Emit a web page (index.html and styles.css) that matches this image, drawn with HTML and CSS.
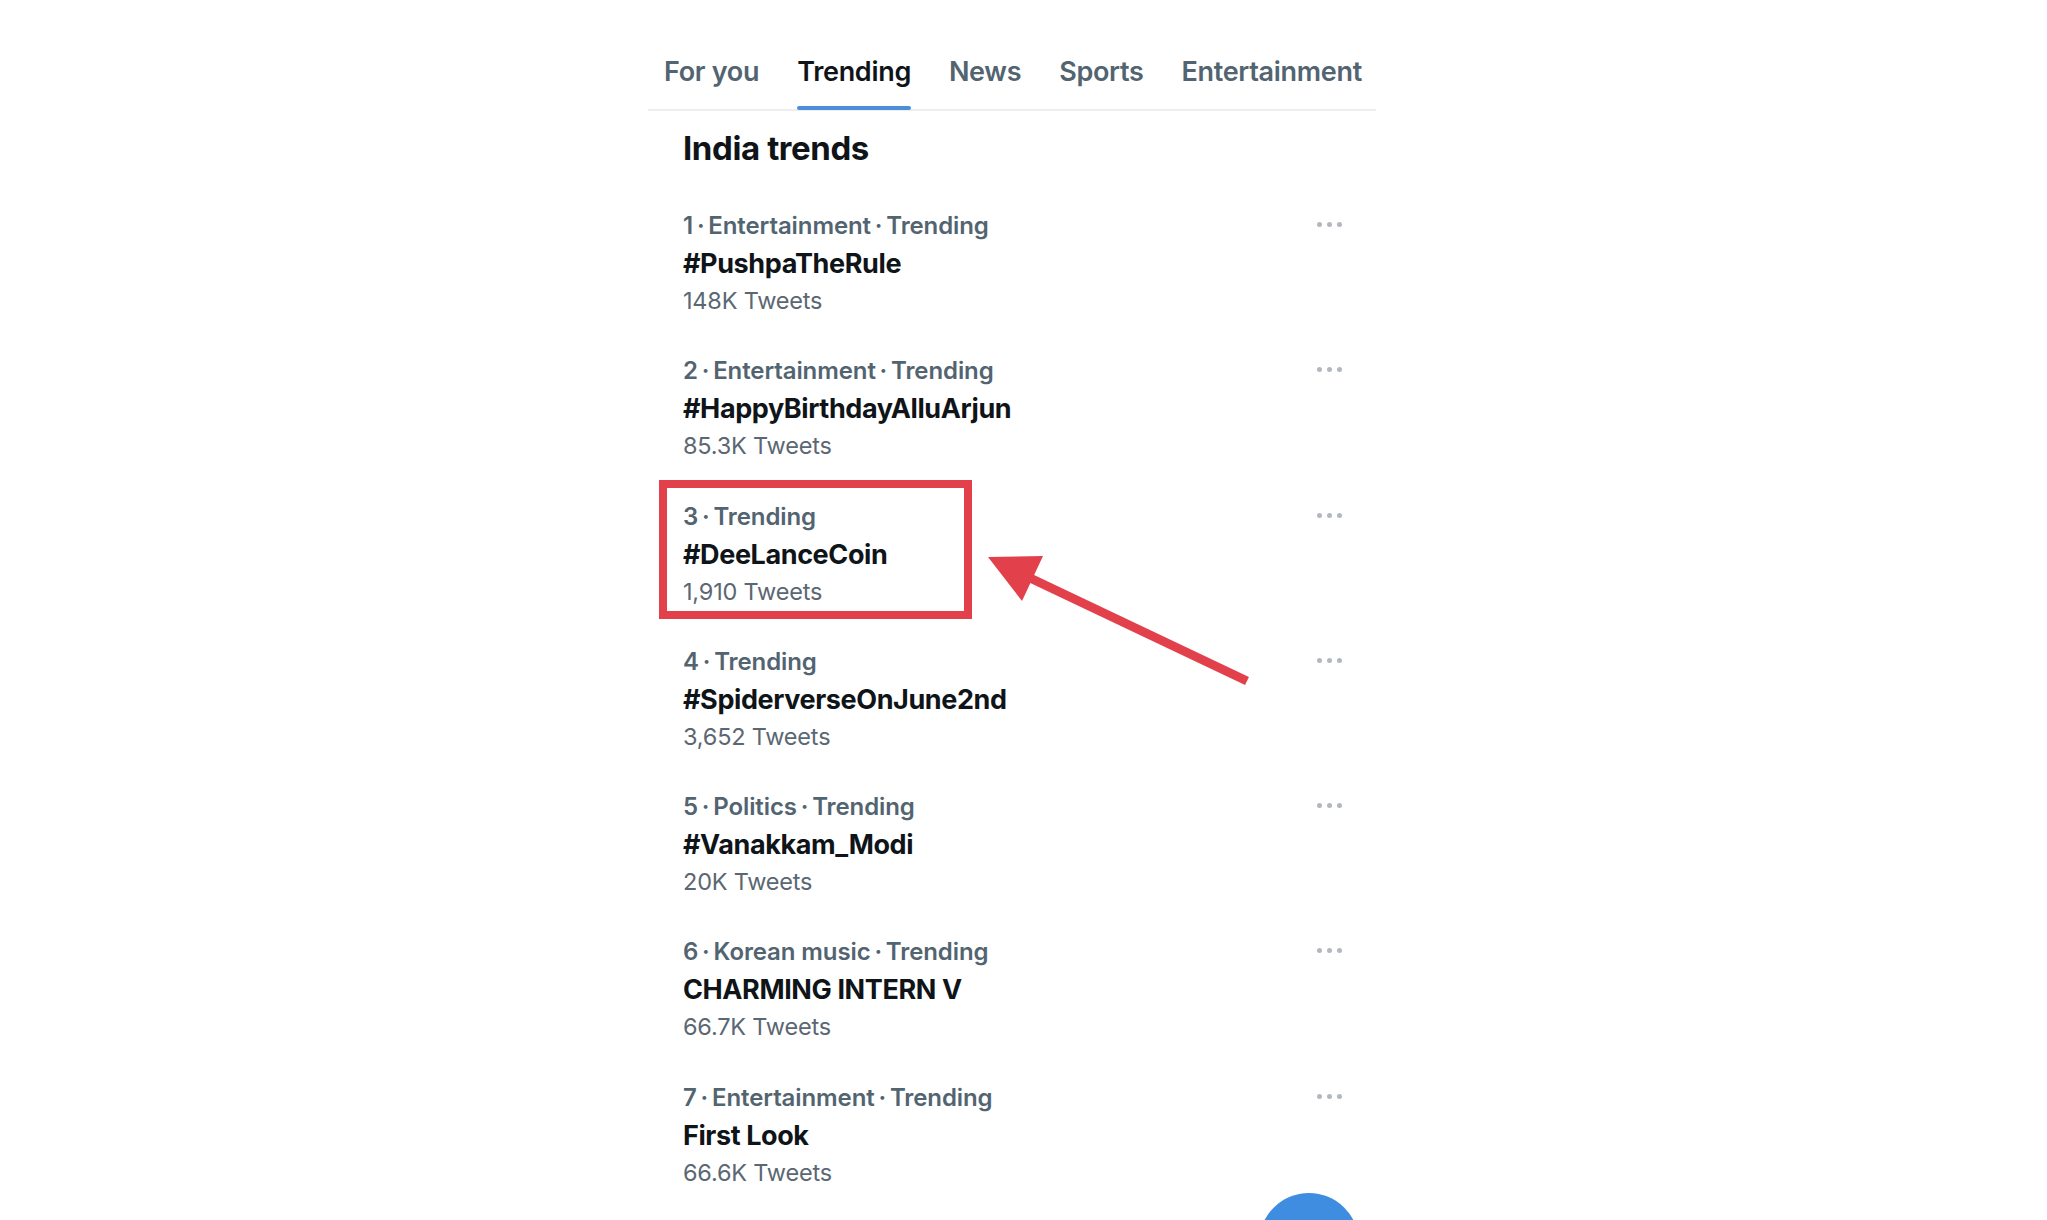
FILE: index.html
```html
<!DOCTYPE html>
<html lang="en">
<head>
<meta charset="utf-8">
<title>India trends</title>
<link rel="stylesheet" href="styles.css">
</head>
<body>
<div class="page">
  <div class="column">
    <nav class="tabs">
      <span class="tab">For you</span>
      <span class="tab active">Trending</span>
      <span class="tab">News</span>
      <span class="tab">Sports</span>
      <span class="tab">Entertainment</span>
    </nav>
    <h1 class="heading">India trends</h1>
    <ul class="trends">
      <li class="trend">
        <div class="info">
          <div class="meta">1&#8201;·&#8201;Entertainment&#8201;·&#8201;Trending</div>
          <div class="title">#PushpaTheRule</div>
          <div class="count">148K Tweets</div>
        </div>
        <span class="more"><i></i><i></i><i></i></span>
      </li>
      <li class="trend">
        <div class="info">
          <div class="meta">2&#8201;·&#8201;Entertainment&#8201;·&#8201;Trending</div>
          <div class="title">#HappyBirthdayAlluArjun</div>
          <div class="count">85.3K Tweets</div>
        </div>
        <span class="more"><i></i><i></i><i></i></span>
      </li>
      <li class="trend highlighted">
        <span class="highlight-box"></span>
        <div class="info">
          <div class="meta">3&#8201;·&#8201;Trending</div>
          <div class="title">#DeeLanceCoin</div>
          <div class="count">1,910 Tweets</div>
        </div>
        <span class="more"><i></i><i></i><i></i></span>
      </li>
      <li class="trend">
        <div class="info">
          <div class="meta">4&#8201;·&#8201;Trending</div>
          <div class="title">#SpiderverseOnJune2nd</div>
          <div class="count">3,652 Tweets</div>
        </div>
        <span class="more"><i></i><i></i><i></i></span>
      </li>
      <li class="trend">
        <div class="info">
          <div class="meta">5&#8201;·&#8201;Politics&#8201;·&#8201;Trending</div>
          <div class="title">#Vanakkam_Modi</div>
          <div class="count">20K Tweets</div>
        </div>
        <span class="more"><i></i><i></i><i></i></span>
      </li>
      <li class="trend">
        <div class="info">
          <div class="meta">6&#8201;·&#8201;Korean music&#8201;·&#8201;Trending</div>
          <div class="title">CHARMING INTERN V</div>
          <div class="count">66.7K Tweets</div>
        </div>
        <span class="more"><i></i><i></i><i></i></span>
      </li>
      <li class="trend">
        <div class="info">
          <div class="meta">7&#8201;·&#8201;Entertainment&#8201;·&#8201;Trending</div>
          <div class="title">First Look</div>
          <div class="count">66.6K Tweets</div>
        </div>
        <span class="more"><i></i><i></i><i></i></span>
      </li>
    </ul>
  </div>
  <svg class="arrow" width="2047" height="1220" viewBox="0 0 2047 1220">
    <line x1="1028" y1="577" x2="1247" y2="681" stroke="#e2414c" stroke-width="9"/>
    <polygon points="988,557 1043,556 1022,601" fill="#e2414c"/>
  </svg>
  <span class="fab"></span>
</div>
</body>
</html>
```

FILE: styles.css
```css
* {
  box-sizing: border-box;
}

html, body {
  margin: 0;
  padding: 0;
  background: #ffffff;
}

body {
  font-family: Inter, "Noto Sans", "Liberation Sans", sans-serif;
  color: #0f1419;
  width: 2047px;
  height: 1220px;
  overflow: hidden;
}

.page {
  position: relative;
  width: 2047px;
  height: 1220px;
  overflow: hidden;
}

.column {
  margin-left: 648px;
  width: 728px;
}

.tabs {
  display: flex;
  justify-content: space-between;
  padding: 56px 14px 0 16px;
  border-bottom: 2px solid #eceef0;
}

.tab {
  position: relative;
  flex: none;
  white-space: nowrap;
  font-size: 27px;
  line-height: 32px;
  font-weight: 600;
  color: #536471;
  padding-bottom: 21px;
  letter-spacing: -0.3px;
}

.tab.active {
  color: #0f1419;
}

.tab.active::after {
  content: "";
  position: absolute;
  left: 0;
  right: 0;
  bottom: -1px;
  height: 4px;
  border-radius: 2px;
  background: #4c8fd8;
}

.heading {
  margin: 18px 0 0;
  padding-left: 35px;
  font-size: 33px;
  line-height: 38px;
  font-weight: 700;
  letter-spacing: -0.4px;
}

.trends {
  list-style: none;
  margin: 42px 0 0;
  padding: 0 34px 0 35px;
}

.trend {
  position: relative;
  display: flex;
  justify-content: space-between;
  align-items: flex-start;
  margin-bottom: 38.25px;
}

.meta {
  font-size: 24px;
  line-height: 33px;
  font-weight: 600;
  color: #536471;
  letter-spacing: -0.1px;
  white-space: nowrap;
}

.title {
  font-size: 27px;
  line-height: 44px;
  font-weight: 700;
  color: #0f1419;
  letter-spacing: -0.4px;
  white-space: nowrap;
}

.count {
  font-size: 23.5px;
  line-height: 30px;
  font-weight: 400;
  color: #5b6772;
  letter-spacing: -0.2px;
}

.more {
  display: flex;
  gap: 5px;
  margin-top: 13px;
}

.more i {
  display: block;
  width: 5px;
  height: 5px;
  border-radius: 50%;
  background: #b3b8be;
}

.highlight-box {
  position: absolute;
  left: -24px;
  top: -20px;
  width: 313px;
  height: 139px;
  border: 8px solid #e2414c;
}

.arrow {
  position: absolute;
  left: 0;
  top: 0;
  pointer-events: none;
}

.fab {
  position: absolute;
  left: 1259px;
  top: 1193px;
  width: 100px;
  height: 100px;
  border-radius: 50%;
  background: #3f8de0;
}
```
